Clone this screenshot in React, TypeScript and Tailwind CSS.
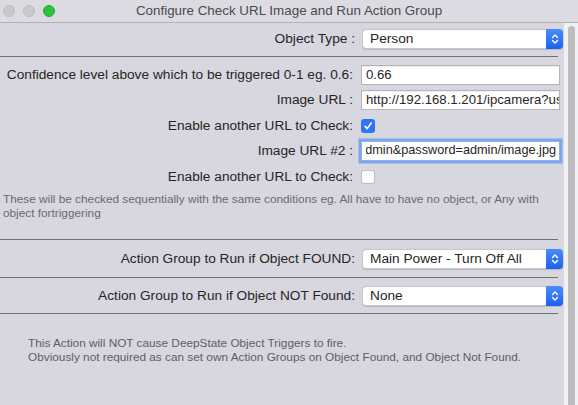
import React from "react";

const font = { fontFamily: '"Liberation Sans", Arial, sans-serif' };

function Popup({ value }: { value: string }) {
  return (
    <div className="flex h-[20px] w-[201px] items-stretch rounded-[4px] border border-[#c9c7cc] bg-white shadow-[0_0.5px_1px_rgba(0,0,0,0.15)]">
      <div className="flex flex-1 items-center pl-[7px] text-[13.7px] text-[#262626]">{value}</div>
      <div className="-my-px -mr-px flex w-[17px] flex-col items-center justify-center rounded-r-[4px] bg-gradient-to-b from-[#4a8cfb] to-[#1b60f0]">
        <svg width="8" height="12" viewBox="0 0 8 12" fill="none" stroke="white" strokeWidth="1.4" strokeLinecap="round" strokeLinejoin="round">
          <path d="M1.5 4.5 L4 2 L6.5 4.5" />
          <path d="M1.5 7.5 L4 10 L6.5 7.5" />
        </svg>
      </div>
    </div>
  );
}

function TextField({ value, focused }: { value: string; focused?: boolean }) {
  return (
    <div
      className={
        "flex h-[20px] w-[199px] items-center border bg-white pl-[4px] text-[#262626] " +
        (focused
          ? "border-[#8fb0e8] pr-[3px] text-[12.7px] ring-[2.5px] ring-[#7ea6ec]"
          : "border-[#b5b3b9] text-[13.2px] shadow-[inset_0_1px_0_rgba(0,0,0,0.06)]")
      }
    >
      <div className={"flex w-full overflow-hidden whitespace-nowrap " + (focused ? "justify-end" : "")}>
        <span className="shrink-0">{value}</span>
      </div>
    </div>
  );
}

function Checkbox({ checked }: { checked?: boolean }) {
  if (checked) {
    return (
      <div className="flex h-[14px] w-[14px] items-center justify-center rounded-[3px] bg-[#2f74f5]">
        <svg width="10" height="10" viewBox="0 0 10 10" fill="none" stroke="white" strokeWidth="1.6" strokeLinecap="round" strokeLinejoin="round">
          <path d="M2 5.3 L4.2 7.6 L8.2 2" />
        </svg>
      </div>
    );
  }
  return <div className="h-[14px] w-[14px] rounded-[3px] border border-[#bdbbc1] bg-white" />;
}

function Row({ label, children, cls }: { label: string; children: React.ReactNode; cls: string }) {
  return (
    <div className={"flex items-center " + cls}>
      <div className="w-[353px] shrink-0 whitespace-nowrap text-right text-[13.7px] leading-none text-[#262626]">{label}</div>
      <div className="ml-[8px] flex">{children}</div>
    </div>
  );
}

function PopupRow({ label, value, cls }: { label: string; value: string; cls: string }) {
  return (
    <div className={"flex h-[20px] items-center " + cls}>
      <div className="w-[355px] shrink-0 whitespace-nowrap text-right text-[13.7px] leading-none text-[#262626]">{label}</div>
      <div className="ml-[7px]">
        <Popup value={value} />
      </div>
    </div>
  );
}

function Sep({ cls }: { cls: string }) {
  return <div className={"h-px w-[558px] bg-[#727174] " + cls} />;
}

export default function App() {
  return (
    <div className="flex h-[405px] w-[578px] flex-col overflow-hidden bg-[#d8d6df]" style={font}>
      {/* title bar */}
      <div className="relative flex h-[23px] shrink-0 items-center border-b border-[#b3b1b8] bg-[#dddbe2]">
        <div className="absolute left-[3px] top-[5px] flex gap-[8px]">
          <div className="h-[12px] w-[12px] rounded-full border border-[#bdbbc0] bg-[#cac8cd]" />
          <div className="h-[12px] w-[12px] rounded-full border border-[#bdbbc0] bg-[#cac8cd]" />
          <div className="h-[12px] w-[12px] rounded-full border border-[#22ad35] bg-[#2ac43f]" />
        </div>
        <div className="w-full text-center text-[13.4px] text-[#4b4a4f]">Configure Check URL Image and Run Action Group</div>
      </div>

      <div className="flex flex-1">
        <div className="w-[564px] shrink-0">
          <PopupRow label="Object Type :" value="Person" cls="mt-[6px]" />
          <Sep cls="mt-[7px]" />

          <Row label="Confidence level above which to be triggered 0-1 eg. 0.6:" cls="mt-[8px] h-[20px]">
            <TextField value="0.66" />
          </Row>
          <Row label="Image URL :" cls="mt-[5px] h-[20px]">
            <TextField value="http://192.168.1.201/ipcamera?us" />
          </Row>
          <Row label="Enable another URL to Check:" cls="mt-[9px] h-[14px]">
            <Checkbox checked />
          </Row>
          <Row label="Image URL #2 :" cls="mt-[8px] h-[20px]">
            <TextField value="admin&password=admin/image.jpg" focused />
          </Row>
          <Row label="Enable another URL to Check:" cls="mt-[9px] h-[14px]">
            <Checkbox />
          </Row>

          <div className="mt-[8px] w-[550px] pl-[3px] text-[11.8px] leading-[14px] text-[#6a6a6e]">
            These will be checked sequentially with the same conditions eg. All have to have no object, or Any with object fortriggering
          </div>

          <Sep cls="mt-[19px]" />
          <PopupRow label="Action Group to Run if Object FOUND:" value="Main Power - Turn Off All" cls="mt-[9px]" />
          <Sep cls="mt-[8px]" />
          <PopupRow label="Action Group to Run if Object NOT Found:" value="None" cls="mt-[8px]" />
          <Sep cls="mt-[7px]" />

          <div className="mt-[22px] pl-[28px] text-[11.8px] leading-[14px] text-[#5e5e62]">
            <div>This Action will NOT cause DeepState Object Triggers to fire.</div>
            <div>Obviously not required as can set own Action Groups on Object Found, and Object Not Found.</div>
          </div>
        </div>

        {/* scrollbar */}
        <div className="flex w-[14px] shrink-0 bg-[#f1f0f3] pl-[4px] pr-[3px] pt-[3px]">
          <div className="w-[7px] rounded-t-full bg-[#bdbcbf]" />
        </div>
      </div>
    </div>
  );
}
